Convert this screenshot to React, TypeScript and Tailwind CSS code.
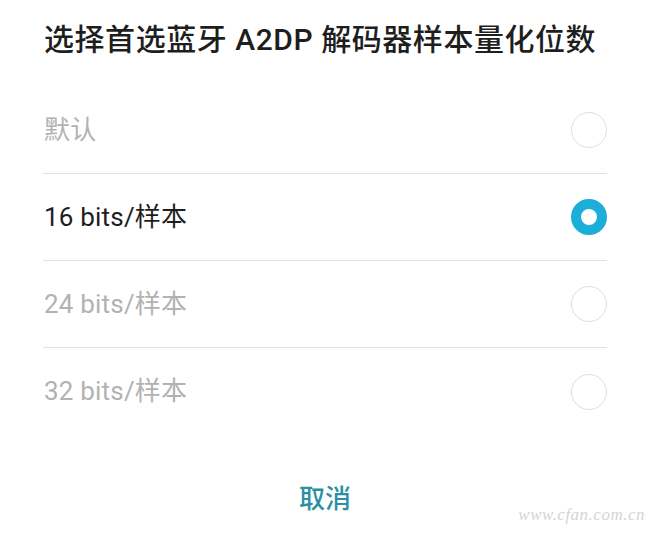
const options = [
  { label: "默认", selected: false },
  { label: "16 bits/样本", selected: true },
  { label: "24 bits/样本", selected: false },
  { label: "32 bits/样本", selected: false },
];

function Radio({ selected }: { selected: boolean }) {
  if (selected) {
    return (
      <div className="w-[36px] h-[36px] rounded-full border-[10px] border-[#1aaed8] bg-white" />
    );
  }
  return <div className="w-[36px] h-[36px] rounded-full border-[1.5px] border-[#dedede]" />;
}

export default function App() {
  return (
    <main
      className="relative w-[650px] h-[534px] bg-white overflow-hidden"
      style={{ fontFamily: 'Roboto, "Noto Sans CJK SC", sans-serif' }}
    >
      <div className="px-[43px] pt-[20px]">
        <h1 className="text-[30px] leading-[40px] font-medium text-[#1e1e1e] tracking-[0.55px] pl-[1px]">
          选择首选蓝牙 A2DP 解码器样本量化位数
        </h1>

        <div className="mt-[27px] flex flex-col">
          {options.map((o, i) => (
            <div
              key={o.label}
              className={`flex items-center justify-between h-[87px] ${
                i < options.length - 1 ? "border-b border-[#e2e2e2]" : ""
              }`}
            >
              <span
                className={`text-[26px] pl-[1px] tracking-[0.2px] ${
                  o.selected ? "text-[#1e1e1e]" : "text-[#b2b2b2]"
                }`}
              >
                {o.label}
              </span>
              <Radio selected={o.selected} />
            </div>
          ))}
        </div>
      </div>

      <div className="flex justify-center pt-[46px]">
        <span className="text-[26px] leading-[36px] font-medium text-[#2a8fa2]">取消</span>
      </div>

      <span
        className="absolute right-[5px] bottom-[7px] text-[17px] italic text-[#d4d4d4] tracking-[0.5px]"
        style={{ fontFamily: '"Liberation Serif", serif' }}
      >
        www.cfan.com.cn
      </span>
    </main>
  );
}
